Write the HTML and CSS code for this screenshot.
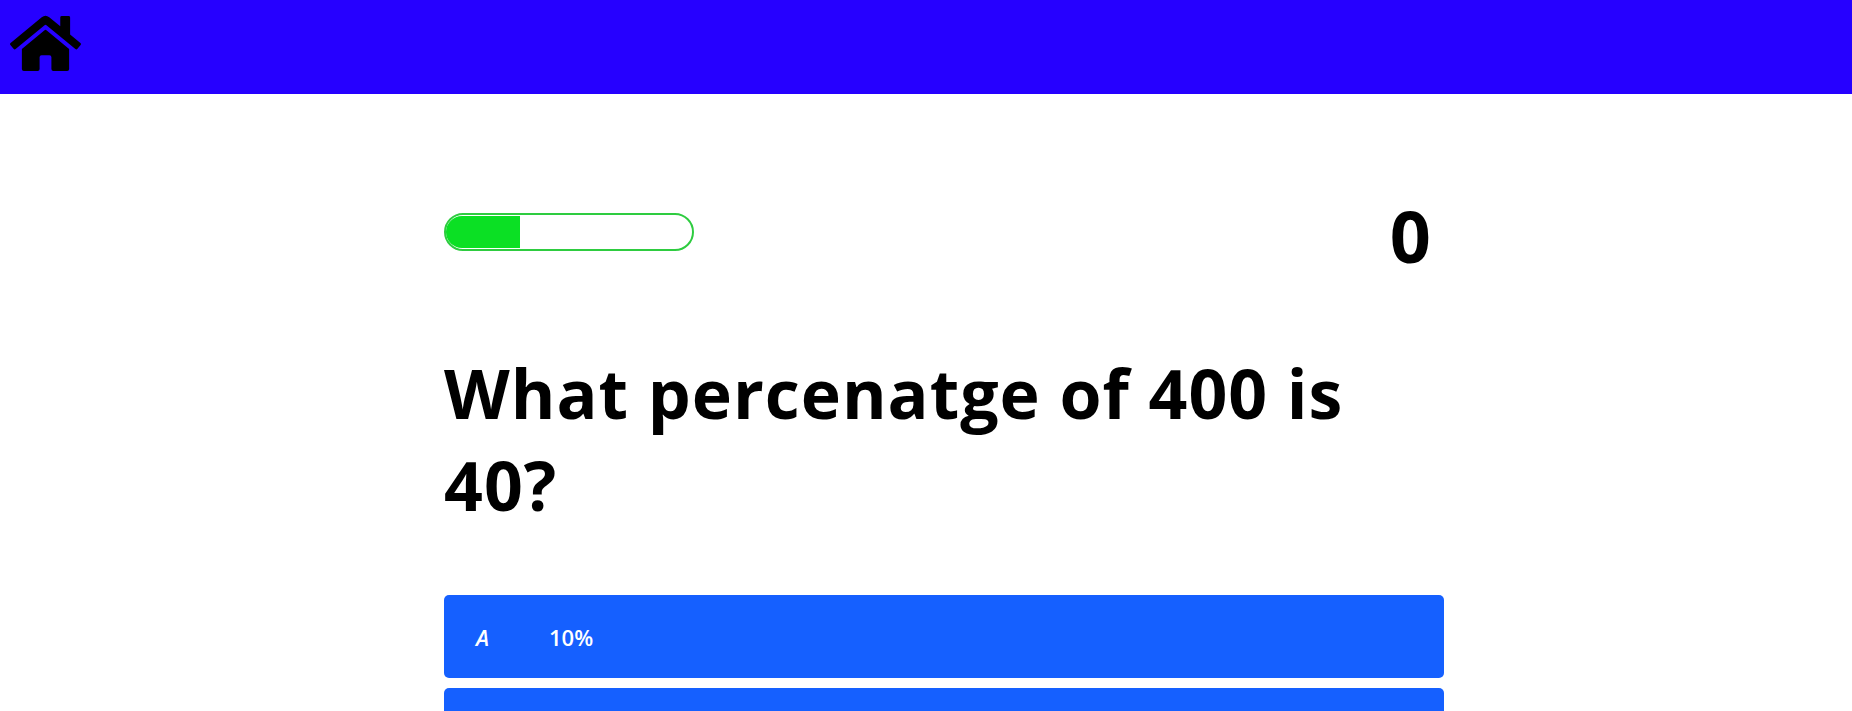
FILE: index.html
```html
<!DOCTYPE html>
<html lang="en">

<head>
  <meta charset="UTF-8">
  <meta name="viewport" content="width=device-width, initial-scale=1.0">
  <title>Quiz</title>
  <link rel="stylesheet" href="styles.css">
</head>

<body>
  <header class="topbar">
    <a class="home-link" href="#" aria-label="Home">
      <svg class="home-icon" viewBox="0 0 576 512" aria-hidden="true">
        <path d="M280.37 148.26L96 300.11V464a16 16 0 0 0 16 16l112.06-.29a16 16 0 0 0 15.92-16V368a16 16 0 0 1 16-16h64a16 16 0 0 1 16 16v95.64a16 16 0 0 0 16 16.05L464 480a16 16 0 0 0 16-16V300L295.67 148.26a12.19 12.19 0 0 0-15.3 0zM571.6 251.47L488 182.56V44.05a12 12 0 0 0-12-12h-56a12 12 0 0 0-12 12v72.61L318.47 43a48 48 0 0 0-61 0L4.34 251.47a12 12 0 0 0-1.6 16.9l25.5 31A12 12 0 0 0 45.15 301l235.22-193.74a12.19 12.19 0 0 1 15.3 0L530.9 301a12 12 0 0 0 16.9-1.6l25.5-31a12 12 0 0 0-1.7-16.93z"></path>
      </svg>
    </a>
  </header>

  <main class="quiz">
    <div class="status">
      <div class="progress">
        <div class="progress-fill"></div>
      </div>
      <div class="score">0</div>
    </div>

    <h1 class="question">What percenatge of 400 is 40?</h1>

    <div class="options">
      <button class="option">
        <span class="option-letter">A</span>
        <span class="option-text">10%</span>
      </button>
      <button class="option"></button>
    </div>
  </main>
</body>

</html>
```

FILE: styles.css
```css
html,
body {
  height: 100%;
}

body {
  font-family: 'Open Sans', 'DejaVu Sans', sans-serif;
  background-color: #fff;
  color: #000;
  margin: 0;
  overflow: hidden;
}

.topbar {
  height: 94px;
  background-color: #2600ff;
  padding: 12px 0 0 10px;
  box-sizing: border-box;
}

.home-link {
  display: block;
  width: 71px;
  height: 63px;
}

.home-icon {
  display: block;
  width: 71px;
  height: 63px;
  fill: #000;
}

.quiz {
  width: 1000px;
  margin-left: 444px;
  padding-top: 119px;
}

.status {
  display: flex;
  justify-content: space-between;
  align-items: flex-start;
  height: 134px;
}

.progress {
  width: 250px;
  height: 38px;
  box-sizing: border-box;
  border: 2px solid #2ecc40;
  border-radius: 19px;
  padding: 1px 1px 1px 0;
}

.progress-fill {
  width: 74px;
  height: 100%;
  background-color: #0be024;
  border-radius: 17px 0 0 17px;
}

.score {
  font-size: 72px;
  font-weight: 700;
  line-height: 44px;
  margin-right: 13px;
}

.question {
  font-size: 68px;
  font-weight: 700;
  line-height: 92px;
  margin: 0 0 64px;
  letter-spacing: 1px;
}

.options {
  display: flex;
  flex-direction: column;
  gap: 10px;
}

.option {
  display: flex;
  align-items: center;
  flex-shrink: 0;
  height: 83px;
  padding: 0 32px;
  border: 0;
  border-radius: 5px;
  background-color: #1560ff;
  color: #fff;
  font-family: inherit;
  font-size: 22px;
  font-weight: 600;
  text-align: left;
}

.option-letter {
  width: 73px;
  font-style: italic;
}
```
